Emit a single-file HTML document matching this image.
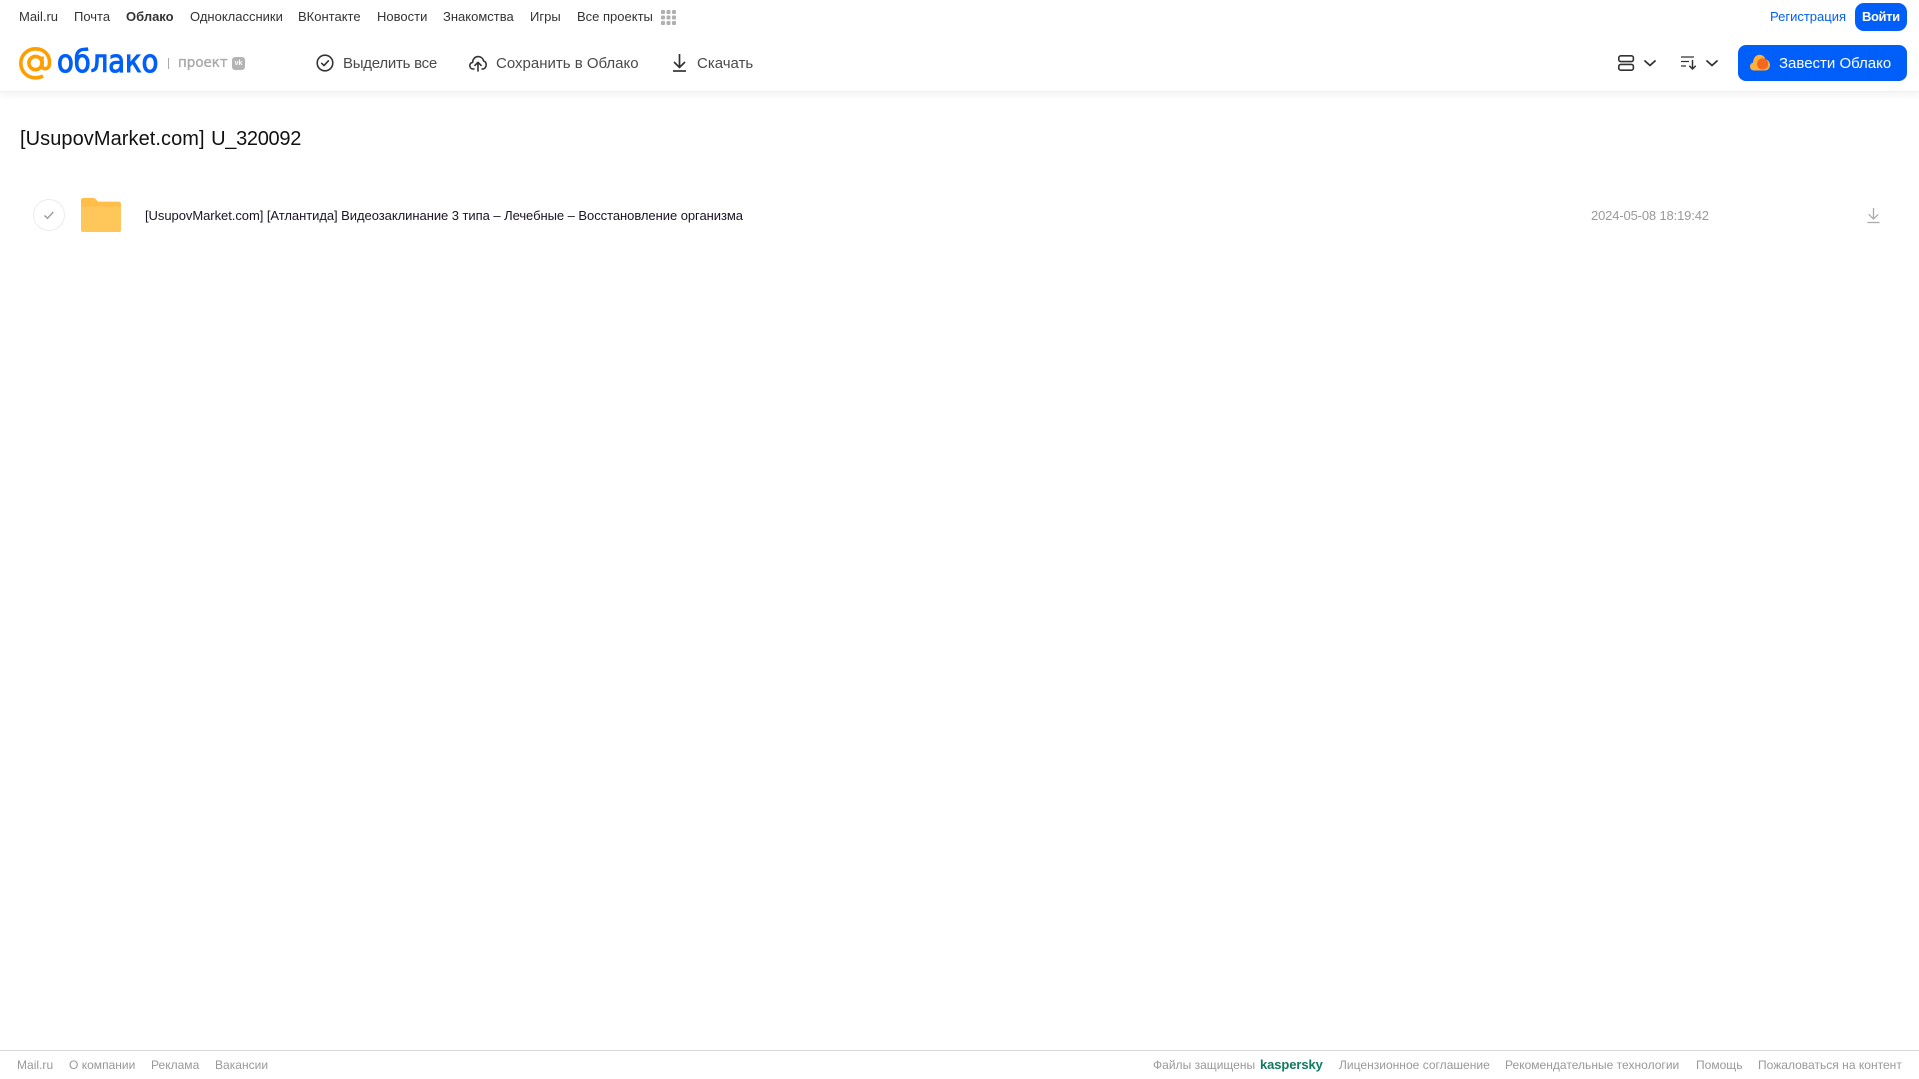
<!DOCTYPE html>
<html lang="ru"><head><meta charset="utf-8"><title>Облако</title>
<style>
html,body{margin:0;padding:0;background:#fff;width:1919px;height:1079px;overflow:hidden}
body{position:relative;font-family:"Liberation Sans",Arial,sans-serif}
.t{position:absolute;white-space:nowrap;line-height:20px}
.top{font-size:13px;color:#333;top:7px}
.act{font-size:15px;color:#4a4a4a;top:54px}
.ft{font-size:12px;color:#999;top:1055px;letter-spacing:.02px}
svg{position:absolute;overflow:visible}
a{color:inherit;text-decoration:none}
</style></head><body>
<div style="position:absolute;left:0;top:0;width:1919px;height:91px;background:#fff;border-bottom:1px solid #f0f0f0;box-shadow:0 3px 8px rgba(0,0,0,.05)"></div>

<a class="t top" style="left:19px">Mail.ru</a>
<a class="t top" style="left:74px">Почта</a>
<a class="t top" style="left:126px;font-weight:bold">Облако</a>
<a class="t top" style="left:190px">Одноклассники</a>
<a class="t top" style="left:298px">ВКонтакте</a>
<a class="t top" style="left:377px">Новости</a>
<a class="t top" style="left:443px">Знакомства</a>
<a class="t top" style="left:530px">Игры</a>
<a class="t top" style="left:577px">Все проекты</a>
<svg style="left:661px;top:10px" width="15" height="15" fill="#b0b0b0"><rect width="4" height="4" rx="1"/><rect x="5.5" width="4" height="4" rx="1"/><rect x="11" width="4" height="4" rx="1"/><rect y="5.5" width="4" height="4" rx="1"/><rect x="5.5" y="5.5" width="4" height="4" rx="1"/><rect x="11" y="5.5" width="4" height="4" rx="1"/><rect y="11" width="4" height="4" rx="1"/><rect x="5.5" y="11" width="4" height="4" rx="1"/><rect x="11" y="11" width="4" height="4" rx="1"/></svg>

<a class="t top" style="left:1770px;color:#005ff9">Регистрация</a>
<div style="position:absolute;left:1855px;top:3px;width:52px;height:28px;border-radius:9px;background:#005ff9"></div>
<a class="t top" style="left:1862px;color:#fff;font-weight:bold;letter-spacing:-.4px">Войти</a>

<svg style="left:19px;top:47px" width="33" height="33" viewBox="0 0 33 33" fill="none" stroke="#ff9e00" stroke-width="3.6"><circle cx="16.5" cy="16" r="6.6"/><path d="M23 9.5V18.5C23 23 29.8 23 30.4 17.5C31.5 7.5 24.5 1.8 16.5 1.8C8 1.8 1.8 8.4 1.8 16.3C1.8 24.5 8.2 30.8 16.5 30.8C19.5 30.8 21.8 30.2 24 29"/></svg>
<div class="t" style="left:57px;top:46px;font-size:31px;line-height:32px;color:#005ff9;-webkit-text-stroke:1.1px #005ff9;font-family:'DejaVu Sans',sans-serif;transform-origin:0 50%;transform:scaleX(.885)">облако</div>
<div style="position:absolute;left:168px;top:58px;width:1px;height:11px;background:#aaa"></div>
<div class="t" style="left:178px;top:53px;font-size:14px;color:#a9a9a9;-webkit-text-stroke:.35px #a9a9a9;font-family:'DejaVu Sans',sans-serif;transform-origin:0 50%;transform:scaleX(.96)">проект</div>
<div style="position:absolute;left:232px;top:57px;width:13px;height:13px;border-radius:3px;background:#b4b4b4;color:#fff;font:bold 7px/13px 'Liberation Sans',sans-serif;text-align:center">vk</div>

<svg style="left:316px;top:54px" width="18" height="18" viewBox="0 0 18 18" fill="none" stroke="#333" stroke-width="1.6"><circle cx="9" cy="9" r="7.8"/><path d="M5.7 9.3L8 11.6L12.4 6.8" stroke-linecap="round" stroke-linejoin="round"/></svg>
<div class="t act" style="left:343px;letter-spacing:-.25px">Выделить все</div>
<svg style="left:469px;top:54px" width="18" height="18" viewBox="0 0 18 18" fill="none" stroke="#333" stroke-width="1.6" stroke-linecap="round" stroke-linejoin="round"><path d="M5 15H4.2C2 15 .8 13.4.8 11.6C.8 9.8 2 8.6 3.6 8.4C3.8 5 6 2.6 9.2 2.6C12 2.6 14 4.4 14.6 7C16.2 7.4 17.2 8.8 17.2 10.8C17.2 13 15.8 15 13.4 15H13"/><path d="M9 17V8.5M5.9 11.4L9 8.3L12.1 11.4"/></svg>
<div class="t act" style="left:496px">Сохранить в Облако</div>
<svg style="left:672px;top:54px" width="15" height="18" viewBox="0 0 15 18" fill="none" stroke="#333" stroke-width="1.7"><path d="M7.5 0V13M2 8L7.5 13.4L13 8"/><path d="M1 17H14"/></svg>
<div class="t act" style="left:697px">Скачать</div>

<svg style="left:1618px;top:55px" width="16" height="16" fill="none" stroke="#333" stroke-width="1.6"><rect x=".8" y=".8" width="14.6" height="5.8" rx="2"/><rect x=".8" y="9.4" width="14.6" height="5.8" rx="2"/></svg>
<svg style="left:1644px;top:60px" width="12" height="7" fill="none" stroke="#333" stroke-width="1.8" stroke-linecap="round" stroke-linejoin="round"><path d="M1 1L6 5.5L11 1"/></svg>
<svg style="left:1681px;top:56px" width="16" height="14" fill="none" stroke="#333" stroke-width="1.2"><path d="M0 1H13M0 5.5H8M0 10H5"/><path d="M11.5 4V13M8.3 9.8L11.5 13L14.7 9.8" stroke-width="1.5"/></svg>
<svg style="left:1706px;top:60px" width="12" height="7" fill="none" stroke="#333" stroke-width="1.8" stroke-linecap="round" stroke-linejoin="round"><path d="M1 1L6 5.5L11 1"/></svg>

<div style="position:absolute;left:1738px;top:45px;width:169px;height:36px;border-radius:8px;background:#005ff9"></div>
<svg style="left:1750px;top:54px" width="20" height="17" viewBox="0 0 20 17"><path d="M4 16.5C1.6 16.5 0 14.7 0 12.5C0 10.6 1.2 9 3 8.6C3.2 4 6 .7 9.5 .7C12.4 .7 14.6 2.5 15.4 5.2C18 5.7 20 8 20 11C20 14.2 17.7 16.5 14.6 16.5Z" fill="#ffb03a"/><circle cx="12.6" cy="10" r="5.6" fill="#f2681e"/></svg>
<div class="t" style="left:1779px;top:54px;font-size:15px;color:#fff">Завести Облако</div>

<div class="t" style="left:20px;top:127px;line-height:24px;font-size:20px;color:#111;word-spacing:.9px"><span style="letter-spacing:.07px">[UsupovMarket.com]</span> <span style="letter-spacing:-.3px">U_320092</span></div>

<svg style="left:33px;top:199px" width="32" height="32" fill="none"><circle cx="16" cy="16" r="15.5" stroke="#ececec"/><path d="M11.5 16.5L14.5 19.3L20.3 13" stroke="#999" stroke-width="1.4"/></svg>
<svg style="left:81px;top:198px" width="40" height="34" viewBox="0 0 40 34"><path d="M2 0H12C14 0 15 1 16 2.5C16.6 3.5 17.5 3.6 18.5 3.6H37.5C39 3.6 40 4.6 40 6V32C40 33.2 39 34 38 34H2C1 34 0 33.2 0 32V2C0 1 1 0 2 0Z" fill="#ffbe4a"/><path d="M0 8.5H40V32C40 33.2 39 34 38 34H2C1 34 0 33.2 0 32Z" fill="#ffc659"/></svg>
<div class="t" style="left:145px;top:206px;font-size:13px;letter-spacing:-.05px;color:#1a1423">[UsupovMarket.com] [Атлантида] Видеозаклинание 3 типа – Лечебные – Восстановление организма</div>
<div class="t" style="left:1591px;top:206px;font-size:13px;letter-spacing:-.15px;color:#999">2024-05-08 18:19:42</div>
<svg style="left:1867px;top:207px" width="13" height="17" viewBox="0 0 13 17" fill="none" stroke="#aaa" stroke-width="1.3"><path d="M6.5 1V12M1.7 7.3L6.5 12L11.3 7.3"/><path d="M.5 15.5H12.5"/></svg>

<div style="position:absolute;left:0;top:1050px;width:1919px;height:1px;background:#d8d8d8"></div>
<a class="t ft" style="left:17px">Mail.ru</a>
<a class="t ft" style="left:69px">О компании</a>
<a class="t ft" style="left:151px">Реклама</a>
<a class="t ft" style="left:215px">Вакансии</a>
<a class="t ft" style="left:1153px">Файлы защищены</a>
<a class="t ft" style="left:1260px;color:#10795f;font-weight:bold;font-size:13px;letter-spacing:-.1px">kaspersky</a>
<a class="t ft" style="left:1339px">Лицензионное соглашение</a>
<a class="t ft" style="left:1505px">Рекомендательные технологии</a>
<a class="t ft" style="left:1696px">Помощь</a>
<a class="t ft" style="left:1758px">Пожаловаться на контент</a>
</body></html>
